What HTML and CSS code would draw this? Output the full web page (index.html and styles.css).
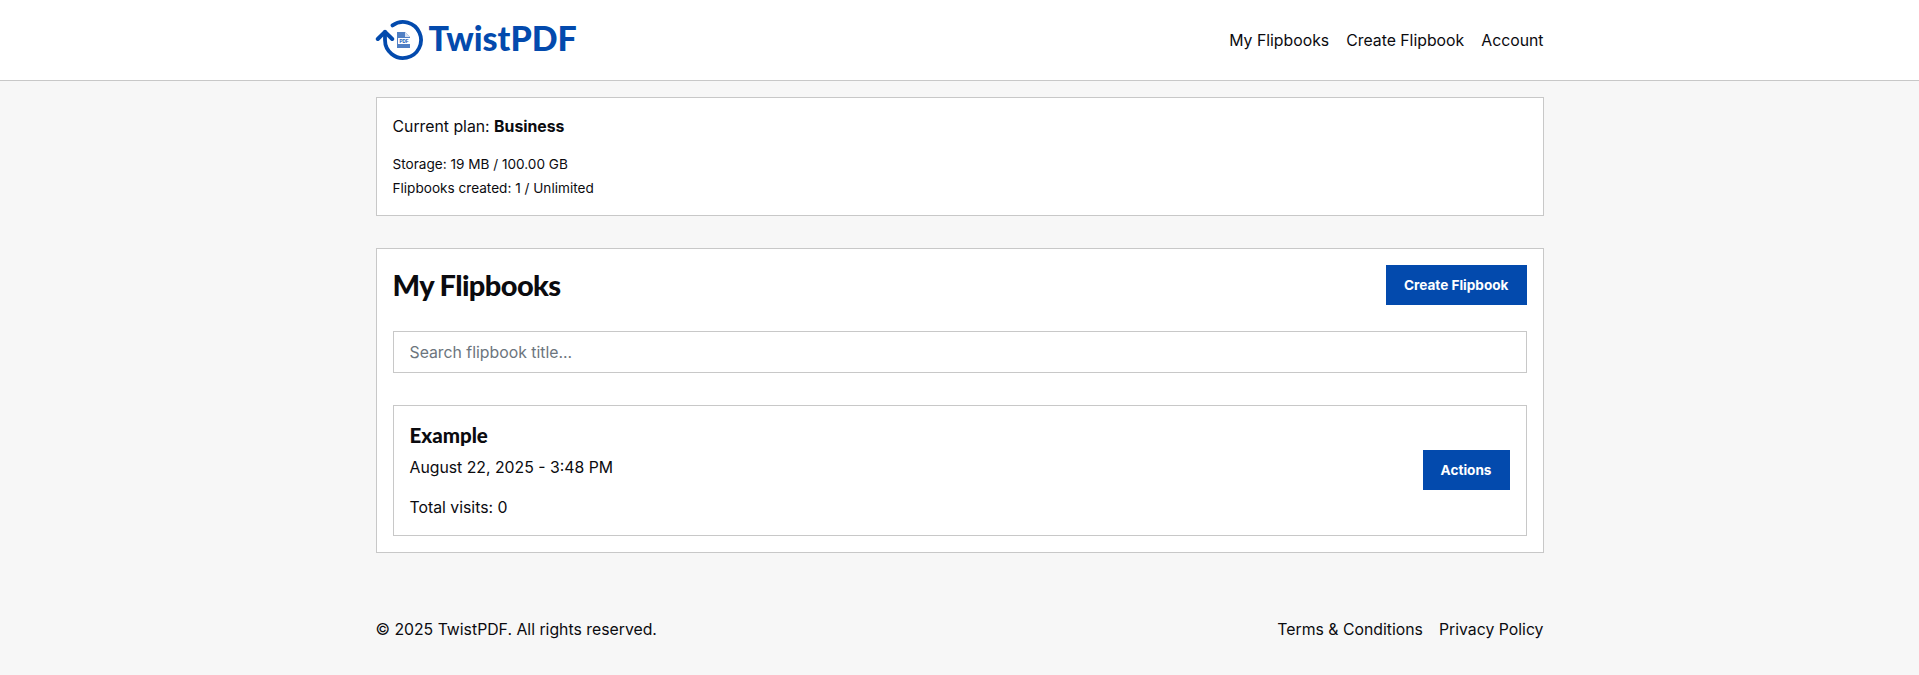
FILE: index.html
```html
<!DOCTYPE html>
<html lang="en">
<head>
<meta charset="utf-8">
<title>TwistPDF</title>
<link rel="stylesheet" href="styles.css">
</head>
<body>
<header class="site-header">
  <div class="wrap header-row">
    <a class="logo" href="#">
      <svg class="logo-icon" viewBox="0 0 50 50" width="50" height="50" aria-hidden="true">
        <path d="M10 17 V25 A18 18 0 1 0 17.5 10.4" fill="none" stroke="#034aad" stroke-width="3.8" stroke-linecap="round"/>
        <path d="M2.8 24 L10 16.8 L17.2 24" fill="none" stroke="#034aad" stroke-width="4" stroke-linecap="round" stroke-linejoin="round"/>
        <path d="M22 17 H30 L35 22 V33 H22 Z" fill="#4f7fc4"/>
        <path d="M30 17 L35 22 H30 Z" fill="#d5e0f2"/>
        <rect x="23" y="23" width="12" height="6" fill="#fff"/>
        <text class="logo-pdf" x="29" y="27.8">PDF</text>
      </svg>
      <span class="logo-text">TwistPDF</span>
    </a>
    <nav class="nav">
      <a href="#">My Flipbooks</a>
      <a href="#">Create Flipbook</a>
      <a href="#">Account</a>
    </nav>
  </div>
</header>
<main class="wrap main">
  <section class="card plan">
    <p class="plan-title">Current plan: <strong>Business</strong></p>
    <p class="plan-line">Storage: 19 MB / 100.00 GB</p>
    <p class="plan-line">Flipbooks created: 1 / Unlimited</p>
  </section>
  <section class="card books">
    <div class="books-head">
      <h1>My Flipbooks</h1>
      <a class="btn" href="#">Create Flipbook</a>
    </div>
    <input class="search" type="text" placeholder="Search flipbook title...">
    <article class="item">
      <div class="item-info">
        <h2>Example</h2>
        <p class="item-date">August 22, 2025 - 3:48 PM</p>
        <p class="item-visits">Total visits: 0</p>
      </div>
      <a class="btn btn-actions" href="#">Actions</a>
    </article>
  </section>
</main>
<footer class="wrap footer">
  <span>© 2025 TwistPDF. All rights reserved.</span>
  <div class="footer-links">
    <a href="#">Terms &amp; Conditions</a>
    <a href="#">Privacy Policy</a>
  </div>
</footer>
</body>
</html>
```
FILE: styles.css
```css
* { box-sizing: border-box; }
html, body { margin: 0; padding: 0; }
body {
  background: #f7f7f7;
  color: #0b0b0f;
  font-family: Inter, "Liberation Sans", sans-serif;
  font-size: 15.8px;
  line-height: 24px;
}
a { color: inherit; text-decoration: none; }
p, h1, h2 { margin: 0; }
.wrap { width: 1168px; margin: 0 auto; }
.site-header {
  height: 81px;
  background: #fff;
  border-bottom: 1px solid #c8c8c8;
}
.header-row {
  height: 80px;
  display: flex;
  align-items: center;
  justify-content: space-between;
}
.logo { display: flex; align-items: center; gap: 4px; }
.logo-icon { display: block; margin-left: -1px; }
.logo-pdf {
  font-family: "Liberation Sans", sans-serif;
  font-size: 4.5px;
  font-weight: 700;
  text-anchor: middle;
  fill: #034aad;
}
.logo-text {
  font-family: Lato, sans-serif;
  font-weight: 900;
  font-size: 34px;
  line-height: 42px;
  color: #034aad;
  margin-top: -4px;
}
.nav { display: flex; gap: 17px; padding-top: 2px; }
.main { padding-top: 16px; }
.card { background: #fff; border: 1px solid #c8c8c8; padding: 16px; }
.plan { height: 119px; padding-top: 17px; }
.plan-title { margin-bottom: 13px; line-height: 24px; }
.plan-line { font-size: 13.6px; line-height: 24px; }
.books { margin-top: 32px; height: 305px; }
.books-head { display: flex; justify-content: space-between; align-items: center; height: 40px; }
h1 {
  font-family: Lato, sans-serif;
  font-weight: 900;
  font-size: 29px;
  line-height: 40px;
  letter-spacing: -0.6px;
}
.btn {
  display: flex;
  align-items: center;
  justify-content: center;
  height: 40px;
  padding: 0 18px;
  background: #034aad;
  color: #fff;
  font-size: 13.6px;
  font-weight: 700;
}
.btn-actions { margin-bottom: 1px; }
.search {
  display: block;
  width: 100%;
  height: 42px;
  margin-top: 26px;
  padding: 0 16px;
  border: 1px solid #c8c8c8;
  border-radius: 0;
  background: #fff;
  font: 15.8px Inter, sans-serif;
  color: #0b0b0f;
  outline: none;
}
.search::placeholder { color: #6c757d; opacity: 1; }
.item {
  margin-top: 32px;
  height: 131px;
  padding: 16px;
  border: 1px solid #c8c8c8;
  display: flex;
  justify-content: space-between;
  align-items: center;
}
.item-info { padding-top: 2px; }
h2 {
  font-family: Lato, sans-serif;
  font-weight: 900;
  font-size: 20.5px;
  line-height: 24px;
}
.item-date { margin-top: 9px; }
.item-visits { margin-top: 16px; }
.footer {
  margin-top: 65px;
  display: flex;
  justify-content: space-between;
}
.footer-links { display: flex; gap: 16px; }
```
